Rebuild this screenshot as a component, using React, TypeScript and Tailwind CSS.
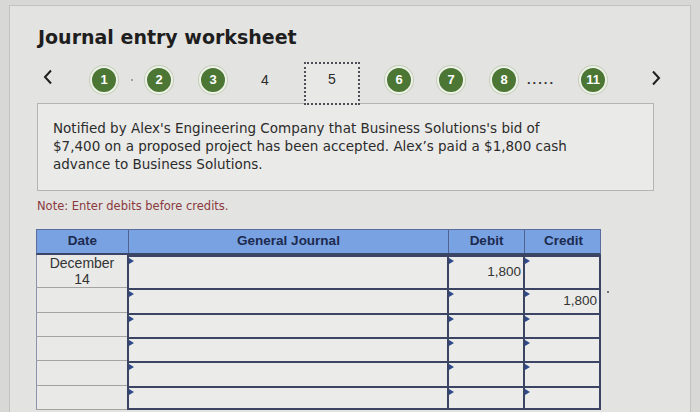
import React from "react";

const verdana = { fontFamily: '"DejaVu Sans", Verdana, sans-serif' };
const arial = { fontFamily: '"Liberation Sans", Arial, sans-serif' };

function Circle({ n, className = "" }: { n: string; className?: string }) {
  return (
    <div
      className={`w-[28px] h-[28px] shrink-0 rounded-full bg-[#4b7634] border-2 border-[#eef2e8] shadow-[0_0_0_1px_#c3cdb8] flex items-center justify-center text-white text-[13px] font-bold ${className}`}
      style={arial}
    >
      {n}
    </div>
  );
}

function Chevron({ dir }: { dir: "left" | "right" }) {
  return (
    <svg width="10" height="16" viewBox="0 0 10 16" className="shrink-0">
      <polyline
        points={dir === "left" ? "8,1.5 2,8 8,14.5" : "2,1.5 8,8 2,14.5"}
        fill="none"
        stroke="#1f1f1f"
        strokeWidth="2"
      />
    </svg>
  );
}

function Marker() {
  return (
    <span className="absolute left-0 top-[1px] w-0 h-0 border-y-[3px] border-y-transparent border-l-[5px] border-l-[#2f4a8a]" />
  );
}

const rows = [
  { h: "h-[33px]", date: ["December", "14"], debit: "1,800", credit: "" },
  { h: "h-[25px]", date: null, debit: "", credit: "1,800" },
  { h: "h-[24px]", date: null, debit: "", credit: "" },
  { h: "h-[24px]", date: null, debit: "", credit: "" },
  { h: "h-[25px]", date: null, debit: "", credit: "" },
  { h: "h-[24px]", date: null, debit: "", credit: "" },
];

export default function App() {
  return (
    <div className="w-[700px] h-[412px] overflow-hidden bg-[#d8d8d6]">
      <div className="ml-[9px] mt-[5px] w-[682px] h-[420px] border border-[#c2c2c0] bg-[#e3e3e1] pl-[26px]">
        <h1 className="pt-[20px] pl-[2px] text-[19px] leading-[22px] font-bold text-[#1e1e1e]" style={verdana}>
          Journal entry worksheet
        </h1>

        {/* step navigation */}
        <div className="mt-[14px] h-[36px] flex items-center text-[#2a2a2a]">
          <div className="w-[24px] flex justify-center -mt-[6px]">
            <Chevron dir="left" />
          </div>
          <Circle n="1" className="ml-[30px]" />
          <div className="w-[27px] flex justify-center">
            <span className="w-[2px] h-[2px] rounded-full bg-[#8a8a88]" />
          </div>
          <Circle n="2" />
          <div className="w-[26px]" />
          <Circle n="3" />
          <span className="ml-[25px] w-[26px] text-center text-[14px]" style={arial}>
            4
          </span>
          <div
            className="ml-[26px] self-start w-[56px] h-[43px] shrink-0 border-2 border-dotted border-[#4e4e56] bg-[#e8e8e6] flex justify-center pt-[5px] text-[14px] relative z-10"
            style={arial}
          >
            5
          </div>
          <Circle n="6" className="ml-[25px]" />
          <Circle n="7" className="ml-[24px]" />
          <Circle n="8" className="ml-[25px]" />
          <span className="ml-[9px] w-[34px] text-[13px] font-bold tracking-[2px] leading-none -mt-[2px] text-[#333]" style={arial}>
            .....
          </span>
          <Circle n="11" className="ml-[18px]" />
          <div className="ml-[44px] -mt-[4px]">
            <Chevron dir="right" />
          </div>
        </div>

        {/* description */}
        <div
          className="mt-[5px] ml-[1px] w-[617px] h-[88px] border border-[#b4b4b2] bg-[#eaeae8] pl-[15px] pt-[15px] text-[13.5px] leading-[18px] text-[#2c2c2c]"
          style={verdana}
        >
          Notified by Alex's Engineering Company that Business Solutions's bid of
          <br />
          $7,400 on a proposed project has been accepted. Alex’s paid a $1,800 cash
          <br />
          advance to Business Solutions.
        </div>

        <p className="mt-[8px] ml-[1px] text-[11.5px] leading-[14px] text-[#8a3a3e]" style={verdana}>
          Note: Enter debits before credits.
        </p>

        {/* journal table */}
        <div className="mt-[16px] w-[565px] relative" style={arial}>
          <div className="grid grid-cols-[91px_320px_76px_78px] h-[26px] bg-[#79a2e2] border-t border-l border-r border-[#5a6d9e] border-b-2 border-b-[#3b4566] text-[13.5px] font-bold text-[#1c2a4f]">
            <div className="flex items-center justify-center">Date</div>
            <div className="flex items-center justify-center border-l border-[#4f6294]">General Journal</div>
            <div className="flex items-center justify-center border-l border-[#4f6294]">Debit</div>
            <div className="flex items-center justify-center border-l border-[#4f6294]">Credit</div>
          </div>
          {rows.map((r, i) => (
            <div key={i} className={`grid grid-cols-[91px_320px_76px_78px] ${r.h} text-[13.5px] text-[#333]`}>
              <div className="border-l border-[#8a93a8] border-b border-b-[#a3a3a1] bg-[#e9e9e7] flex flex-col items-center justify-center leading-[16px] text-[14px]">
                {r.date && (
                  <>
                    <span>{r.date[0]}</span>
                    <span>{r.date[1]}</span>
                  </>
                )}
              </div>
              <div className={`relative bg-[#ebebea] border-l-2 border-t-2 border-[#3b4563] ${i === rows.length - 1 ? "border-b-2" : ""} ${i === 0 ? "border-t-0" : ""}`}>
                <Marker />
              </div>
              <div className={`relative bg-[#ebebea] border-l-2 border-t-2 border-[#3b4563] flex items-center justify-end pr-[2px] ${i === rows.length - 1 ? "border-b-2" : ""} ${i === 0 ? "border-t-0" : ""}`}>
                <Marker />
                {r.debit}
              </div>
              <div className={`relative bg-[#ebebea] border-l-2 border-r-2 border-t-2 border-[#3b4563] flex items-center justify-end pr-[2px] ${i === rows.length - 1 ? "border-b-2" : ""} ${i === 0 ? "border-t-0" : ""}`}>
                <Marker />
                {r.credit}
              </div>
            </div>
          ))}
          <span className="absolute left-[571px] top-[62px] w-[2px] h-[2px] rounded-full bg-[#555]" />
        </div>
      </div>
    </div>
  );
}
